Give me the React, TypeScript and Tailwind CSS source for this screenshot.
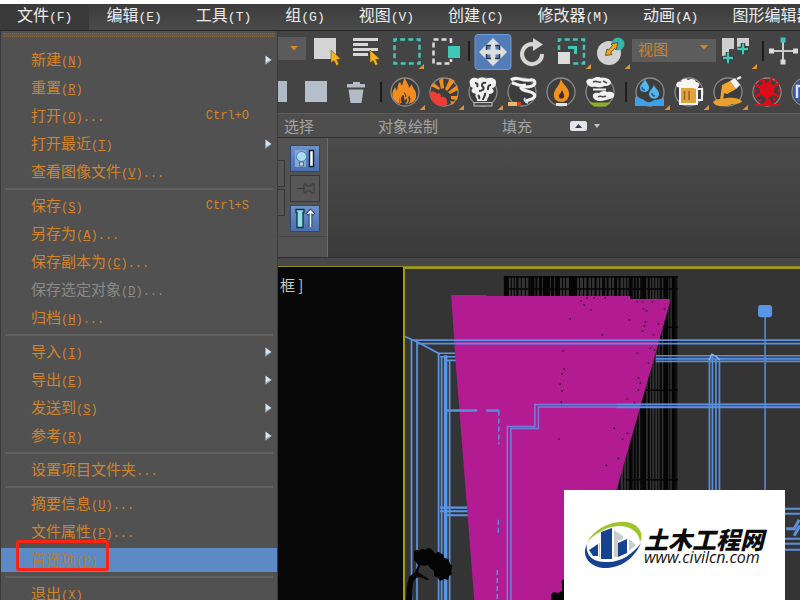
import type { ReactNode } from "react";
import { clsx } from "clsx";

const MONO = "font-['Liberation_Mono','Noto_Sans_CJK_SC',monospace]";
const CJK = "font-['Noto_Sans_CJK_SC',sans-serif]";

interface MenuEntry {
  label: string;
  hotkey?: string;
  dots?: boolean;
  shortcut?: string;
  submenu?: boolean;
  disabled?: boolean;
  active?: boolean;
}

const MENU_BAR = [
  ["文件", "(F)"],
  ["编辑", "(E)"],
  ["工具", "(T)"],
  ["组", "(G)"],
  ["视图", "(V)"],
  ["创建", "(C)"],
  ["修改器", "(M)"],
  ["动画", "(A)"],
  ["图形编辑器", ""],
];

const FILE_MENU: MenuEntry[][] = [
  [
    { label: "新建", hotkey: "N", submenu: true },
    { label: "重置", hotkey: "R" },
    { label: "打开", hotkey: "O", dots: true, shortcut: "Ctrl+O" },
    { label: "打开最近", hotkey: "T", submenu: true },
    { label: "查看图像文件", hotkey: "V", dots: true },
  ],
  [
    { label: "保存", hotkey: "S", shortcut: "Ctrl+S" },
    { label: "另存为", hotkey: "A", dots: true },
    { label: "保存副本为", hotkey: "C", dots: true },
    { label: "保存选定对象", hotkey: "D", dots: true, disabled: true },
    { label: "归档", hotkey: "H", dots: true },
  ],
  [
    { label: "导入", hotkey: "I", submenu: true },
    { label: "导出", hotkey: "E", submenu: true },
    { label: "发送到", hotkey: "S", submenu: true },
    { label: "参考", hotkey: "R", submenu: true },
  ],
  [{ label: "设置项目文件夹", dots: true }],
  [
    { label: "摘要信息", hotkey: "U", dots: true },
    { label: "文件属性", hotkey: "P", dots: true },
    { label: "首选项", hotkey: "P", active: true },
  ],
  [{ label: "退出", hotkey: "X" }],
];

function MenuBar() {
  return (
    <nav className="flex h-[27px] shrink-0 overflow-hidden border-b border-[#262626] bg-linear-to-b from-[#3c3c3c] to-[#4b4b4b]">
      {MENU_BAR.map(([label, key], i) => (
        <button
          key={label}
          className={clsx(
            "flex shrink-0 items-baseline px-[17px] pb-1 text-[#ececec]",
            i === 0 && "bg-[#3a3a3a]"
          )}
        >
          <span className={clsx(CJK, "text-base leading-5")}>{label}</span>
          <span className={clsx(MONO, "text-[13px] leading-5")}>{key}</span>
        </button>
      ))}
    </nav>
  );
}

function MenuRow({ item }: { item: MenuEntry }) {
  return (
    <li className="relative flex h-7 items-center">
      <button
        disabled={item.disabled}
        className={clsx(
          "flex h-6 w-full items-center pr-[5px] pl-[30px] text-left",
          item.active && "bg-[#5b8ac4] text-[#a8804f]",
          item.disabled ? "text-[#8a8a8a]" : !item.active && "text-[#d2842a]"
        )}
      >
        <span className="flex items-baseline">
          <span className={clsx(CJK, "text-[15px] leading-6")}>{item.label}</span>
          <span className={clsx(MONO, "text-xs leading-6")}>
            {item.hotkey && (
              <>
                (<u className="underline-offset-1">{item.hotkey}</u>)
              </>
            )}
            {item.dots && "..."}
          </span>
        </span>
        <span className="grow" />
        {item.shortcut && <span className={clsx(MONO, "pr-[23px] text-xs leading-6")}>{item.shortcut}</span>}
        {item.submenu && (
          <svg width="7" height="10" viewBox="0 0 7 10" aria-hidden="true">
            <path d="M0.5 0.5 6.5 5 0.5 9.5Z" fill="#d7e6f2" />
            <path d="M6.5 5 0.5 9.5 1.5 7Z" fill="#7fa3c0" />
          </svg>
        )}
      </button>
      {item.active && (
        <span className="pointer-events-none absolute -top-1.5 left-[15px] h-[31px] w-[93px] rounded-[3px] border-[3px] border-[#fb2414]" />
      )}
    </li>
  );
}

function FileMenu() {
  return (
    <aside className="w-[278px] shrink-0 overflow-hidden border-x border-[#3a3a3a] bg-[#515151]">
      <div className="mx-0.5 mt-0.5 mb-[9px] h-1 border-y border-dotted border-[#85683f] bg-[#64584a]" />
      {FILE_MENU.map((group, i) => (
        <div key={i}>
          {i > 0 && (
            <div className="mx-1 flex h-1.5 items-center">
              <hr className="w-full border-t-2 border-[#616161]" />
            </div>
          )}
          <ul>
            {group.map((item) => (
              <MenuRow key={item.label} item={item} />
            ))}
          </ul>
        </div>
      ))}
    </aside>
  );
}

interface ToolProps {
  label: string;
  flyout?: boolean;
  ring?: boolean;
  active?: boolean;
  children: ReactNode;
}

function Tool({ label, flyout, ring, active, children }: ToolProps) {
  return (
    <button aria-label={label} className="h-10 w-[39px] shrink-0">
      <svg width="39" height="40" viewBox="0 0 39 40" fill="none">
        {active && <rect x="1" y="3.500" width="36" height="35" rx="3" fill="#527db8" stroke="#6f9bd6" />}
        {ring && <circle cx="19" cy="20" r="14" fill="#3d3d3d" stroke="#8b8b8b" strokeWidth="1.300" />}
        {children}
        {flyout && <path d="M39 33v5h-5.500Z" fill="#dd9338" />}
      </svg>
    </button>
  );
}

function Divider() {
  return (
    <span className="flex h-10 w-[11px] shrink-0 items-center justify-center">
      <span className="h-5 w-0.5 bg-[#1d1d1d]" />
    </span>
  );
}

const CURSOR = "M0 0v13l3-2.500 2.500 5 2.500-1.200-2.400-4.800 4.200-.5Z";

function MainToolbar() {
  return (
    <div className="flex h-[41px] shrink-0 overflow-hidden">
      <button aria-label="过滤器" className="mt-1.5 mr-px flex h-[23px] w-7 shrink-0 items-center justify-center bg-[#5b5b5b] pl-1">
        <svg width="8" height="5" viewBox="0 0 8 5"><path d="M0 0h8L4 4.500Z" fill="#d8852a" /></svg>
      </button>
      <Tool label="选择对象">
        <path d="M7 7h22v21H7Z" fill="#d4d4d4" />
        <path d={CURSOR} transform="translate(24 19)" fill="#f6b21a" stroke="#5a4310" strokeWidth=".5" />
      </Tool>
      <Tool label="按名称选择">
        <path d="M7 8.500h25M7 13.500h15M7 18.500h25M7 23.500h15" stroke="#d8d8d8" strokeWidth="3" />
        <path d={CURSOR} transform="translate(24 19)" fill="#f6b21a" stroke="#5a4310" strokeWidth=".5" />
      </Tool>
      <Tool label="矩形选择区域" flyout>
        <rect x="9.500" y="8.500" width="25" height="24" stroke="#3fc7b8" strokeWidth="2.500" strokeDasharray="5 3.170" strokeDashoffset="2.500" />
      </Tool>
      <Tool label="窗口/交叉">
        <path d="M27 12V8.500H9.500v24H27V28" stroke="#dcdcdc" strokeWidth="2.500" strokeDasharray="5 3" />
        <path d="M24 15h12v12H24Z" fill="#3fc7b8" />
      </Tool>
      <Divider />
      <Tool label="选择并移动" active>
        <g transform="translate(0 1)">
          <path d="M19 6 26 13h-4.500v4.500H26V13l7 7-7 7v-4.500h-4.500V27H26l-7 7-7-7h4.500v-4.500H12V27l-7-7 7-7v4.500h4.500V13H12Z" fill="#dedede" />
          <path d="M12.500 18v-4.500H17M21 13.500h4.500V18M25.500 22v4.500H21M17 26.500h-4.500V22" stroke="#26374f" strokeWidth="1.500" />
        </g>
      </Tool>
      <Tool label="选择并旋转">
        <path d="M23 14a10 10 0 1 0 6 9" stroke="#d6d6d6" strokeWidth="4" />
        <path d="M20 7 30 13.500 20 20Z" fill="#d6d6d6" />
      </Tool>
      <Tool label="选择并缩放" flyout>
        <rect x="7" y="8.500" width="25" height="24" stroke="#3fc7b8" strokeWidth="2.500" strokeDasharray="5 3.170" strokeDashoffset="2.500" />
        <path d="M4 19h16v16H4Z" fill="#444" />
        <path d="M6 21h12v12H6Z" fill="#dcdcdc" />
        <path d="M16 16.500h7.500V23" stroke="#3fc7b8" strokeWidth="3" />
      </Tool>
      <Tool label="选择并放置" flyout>
        <circle cx="18" cy="22" r="12" fill="#d2d2d2" />
        <circle cx="27" cy="13" r="6.500" fill="#35b5ae" />
        <path d="M27 11.500 25 19l-1.500-1.500-4 4.500 1.500 1.500-6.500 1 1.500-6.500 1.500 1 4-4.500-1.500-1.500Z" fill="#f0a91c" stroke="#4c3b17" strokeWidth=".8" />
      </Tool>
      <div className="relative mt-1.5 mr-0.5 ml-0.5 h-[23px] w-[84px] shrink-0">
        <select aria-label="参考坐标系" className={clsx(CJK, "h-full w-full appearance-none bg-[#5d5d5d] pb-1 pl-1.5 text-[15px] leading-5 text-[#cf8230]")}>
          <option>视图</option>
        </select>
        <svg className="pointer-events-none absolute top-2 right-2" width="8" height="5" viewBox="0 0 8 5">
          <path d="M0 0h8L4 4.500Z" fill="#d8852a" />
        </svg>
      </div>
      <Tool label="使用轴点中心" flyout>
        <path d="M4 7h12v11h-5v8H8l-4-1ZM19 7h12v8h-7v4h-5Z" fill="#cfcfcf" />
        <path d="M10 21v12M4.500 27h11M25 12v12M19.500 18h11" stroke="#343434" strokeWidth="4.500" />
        <path d="M10 21.500v11M5 27h10M25 12.500v11M20 18h10" stroke="#3fc7b8" strokeWidth="2.300" />
      </Tool>
      <Divider />
      <Tool label="选择并操纵">
        <path d="M15 8v24M3 20h24" stroke="#c9c9c9" strokeWidth="2" />
        <path d="M12.500 6.500h5v5h-5Z" fill="#3fc7b8" />
        <path d="M1 17.500h5v5H1ZM25 17.500h5v5h-5ZM12.500 28.500h5v5h-5Z" fill="#dcdcdc" />
      </Tool>
    </div>
  );
}

function FluidToolbar() {
  return (
    <div className="flex h-[41px] shrink-0 overflow-hidden">
      <button aria-label="显示列表" className="mt-[9px] mr-2.5 h-[21px] w-[9px] shrink-0 bg-[#b0bbc7]" />
      <Tool label="图层">
        <path d="M8 9h22v21H8Z" fill="#b5bfca" />
      </Tool>
      <Tool label="删除">
        <path d="M11 12h18v3.500H11ZM17 10h7v3h-7ZM12.500 17.500h15L25.500 31h-11Z" fill="#b3bcc6" />
      </Tool>
      <Divider />
      <Tool label="火焰" ring flyout>
        <path d="M14 32C8 30 5 24 7 19l2-4 2 4c1-4 0-6 3-9l2 4c1-3 1-6 3-8 1 4 4 6 4 10l3-4c0 4 4 6 4 10 1 6-3 9-8 10 2-2 4-5 1-8l-2 3c0-3-1-5-3-7-1 4-5 5-5 8 0 2 1 3 1 4Z" fill="#f28c1e" />
        <path d="M15 31c-3-5 1-7 2-10 2 2 2 4 2 6l2-2c2 3 1 5-1 7" stroke="#f28c1e" strokeWidth="1.500" />
      </Tool>
      <Tool label="爆炸" ring flyout>
        <path d="M14 18 6 14l3-3 6 5ZM16 17l-2-9 4-2 1 10ZM20 17l5-11 5 3-8 10ZM23 20l9-7 1 5-8 4ZM26 24h7l-1 4-6-1ZM25 29l5 1-3 3Z" fill="#f28c1e" />
        <path d="M5 21c3-3 6-1 7 1 3-2 4 1 4 3 3-1 6 1 6 4 1 2 0 4-2 5-8 1-15-4-15-13Z" fill="#ee3d32" />
      </Tool>
      <Tool label="烟雾" ring flyout>
        <path d="M6 12c-2-5 4-8 8-5 4-3 7-1 8 0 5-3 11 0 10 4 0 3-2 5-4 5 4 4 0 6-3 6 1 3-2 3-2 7H13c1-3-3-4-1-7-4-1-6-3-3-6-2-1-3-2-3-4Z" fill="#f1f1f1" />
        <path d="M11 11c3 0 3 2 2 4M22 11c-4-1-5 2-3 4s-1 4-4 4M27 13c-3 0-3 2-3 5M19 28c0-3 3-4 2-7M15 27c1-2 0-3-1-4" stroke="#393939" strokeWidth="2" />
        <path d="M10 30.500h18V34H10Z" fill="#4b4b4b" stroke="#c7c7c7" />
      </Tool>
      <Tool label="香烟" ring>
        <path d="M8 8c6-5 10 2 19 0 5-1 7 4 2 6-5 2-9 0-11 2 2 4 9 2 13 6 3 4-3 5-8 7M9 11c6 1 7 4 14 2" stroke="#f2f2f2" strokeWidth="3" />
        <path d="M22 26c-1 2 0 4 3 5" stroke="#c6dff0" strokeWidth="2" />
        <path d="M5 30h9v4H5Z" fill="#e6ba6a" />
        <path d="M14 30h4v4h-4Z" fill="#dc3a2b" />
      </Tool>
      <Tool label="蜡烛" ring>
        <path d="M19 6c0 6 9 9 8 17-1 5-4 7-7 7-5 0-9-3-8-8 0-5 6-8 7-16Z" fill="#f3911f" />
        <path d="M20 17c0 3 3 5 2 8-1 2-5 2-5 0-1-3 3-4 3-8Z" fill="#3a2f26" />
        <path d="M14 31h11v3H14Z" fill="#e2e2e2" />
      </Tool>
      <Tool label="云" ring>
        <path d="M7 13c-4-4 0-7 4-6 4-3 8-2 9-1 6-1 10 2 10 5-1 3-5 3-7 3-5 3-8 0-11 1-2 0-4-1-5-2Z" fill="#f1f1f1" />
        <path d="M12 25c-1-4 3-5 6-4 4-3 7-2 8-1 5-1 8 1 7 4-1 3-5 3-8 4-6 2-12 1-13-3Z" fill="#f1f1f1" />
        <path d="M12 10c4-2 5 1 8 0M22 9l4 2M17 25c3-2 4 1 8-1" stroke="#4a4a4a" strokeWidth="1.500" />
        <path d="M12 17.500h13" stroke="#f1f1f1" strokeWidth="2" />
        <path d="M8 30.500h22l-5 4H13Z" fill="#8cb326" />
      </Tool>
      <Divider />
      <Tool label="水" ring flyout>
        <path d="M14 6c0 4 5 6 4 11-1 4-9 4-9-1 0-4 5-6 5-10ZM23 12c0 4 6 6 5 11-1 5-10 5-10-1 0-4 5-6 5-10Z" fill="#53b4ee" />
        <path d="M4 25c5-1 5 3 8 2 3 4 8 4 11 1 3 0 6-1 10-2v8H4Z" fill="#3aa2ea" />
        <path d="M11 15c0 2 1 3 3 3M21 21c0 2 1 3 3 3" stroke="#1f5f96" strokeWidth="1.500" />
      </Tool>
      <Tool label="啤酒" ring flyout>
        <path d="M10 15h17v17H10Z" fill="#e3a23a" stroke="#f3f3f3" strokeWidth="2" />
        <path d="M27 17h5v11h-5" stroke="#f3f3f3" strokeWidth="2" />
        <path d="M7 15c-2-4 1-6 4-5 1-4 5-4 7-2 4-2 7-1 8 2 4 0 4 4 2 5l-3 2-3-2-4 1-3-1-3 1Z" fill="#f5f5f5" />
        <path d="M14.500 19v9M19 19v9" stroke="#95642a" strokeWidth="1.500" />
      </Tool>
      <Tool label="蜂蜜" ring flyout>
        <path d="m13 13 8-4 6 8-9 5-3-1-1 8h-3Z" fill="#f0a532" />
        <path d="m21 9 5-3 5 7-4 4Z" fill="#f1f1f1" />
        <path d="m28 7 4-2" stroke="#f1f1f1" strokeWidth="2.500" />
        <path d="M4 30c3-4 11-3 14-4 5-1 12 0 15 3-2 4-8 2-12 4-5 2-15 2-17-3Z" fill="#e9a02f" />
      </Tool>
      <Tool label="血液" ring>
        <path d="M19 19 15 8M19 19l4-12M19 19l11-7M19 19 8 13M19 19l11 5M19 19 8 24M19 19v13" stroke="#dc0d18" strokeWidth="3" strokeLinecap="round" />
        <circle cx="19" cy="18" r="7.500" fill="#dc0d18" />
        <path d="M12 8.500h.1M28 8.500h.1M7 18.500h.1M31 18.500h.1M26 27.500h.1M12 28.500h.1" stroke="#dc0d18" strokeWidth="3" strokeLinecap="round" />
        <path d="m19 27-4 5H7v2h25v-2h-8l-2-5Z" fill="#dc0d18" />
      </Tool>
      <Tool label="海洋" ring>
        <circle cx="19" cy="19.500" r="13" fill="#3657b0" />
        <path d="M10 26V14h10v12" stroke="#dce3f5" strokeWidth="2.500" />
      </Tool>
    </div>
  );
}

function RibbonTabs() {
  return (
    <div className={clsx(CJK, "flex h-[25px] shrink-0 items-center overflow-hidden border-t border-b border-t-[#5e5e5e] border-b-[#2f2f2f] bg-[#4e4e4e] pt-1 pl-1.5 text-[15px] leading-5 text-[#a3a3a3]")}>
      <button className="mr-16 shrink-0 pb-1">选择</button>
      <button className="mr-16 shrink-0 pb-1">对象绘制</button>
      <button className="mr-[38px] shrink-0 pb-1">填充</button>
      <button aria-label="最小化功能区" className="flex shrink-0 items-center gap-[7px] pb-1">
        <svg width="17" height="10" viewBox="0 0 17 10">
          <rect width="17" height="10" rx="2.500" fill="#e3e5ea" />
          <path d="M5 7h7L8.500 3Z" fill="#333a48" />
        </svg>
        <svg width="6" height="4" viewBox="0 0 6 4"><path d="M0 0h6L3 4Z" fill="#c4c4c4" /></svg>
      </button>
    </div>
  );
}

const PANEL_BUTTON = "h-[27px] w-[30px] border border-[#2b477c] bg-linear-to-b from-[#6e92ca] to-[#4a70af]";

function RibbonPanel() {
  return (
    <div className="flex h-[120px] shrink-0 border-b border-[#303030] bg-linear-to-b from-[#4b4b4b] to-[#3b3b3b]">
      <div className="flex w-[50px] shrink-0 flex-col border-r border-[#6a6a6a] bg-[#535353]">
        <div className="flex grow gap-[5px] border-b border-[#474747]">
          <div className="flex flex-col gap-0.5 pt-[22px]">
            <button aria-label="上一个" className="h-[27px] w-[7px] border border-l-0 border-[#353535] bg-[#555]" />
            <button aria-label="下一个" className="h-[27px] w-[7px] border border-l-0 border-[#353535] bg-[#555]" />
          </div>
          <div className="flex flex-col gap-[3px] pt-[7px]">
            <button aria-label="显示最终结果" className={PANEL_BUTTON}>
              <svg width="28" height="25" viewBox="0 0 28 25" fill="none">
                <path d="M4 4h11v17H4Z" fill="#88a8d4" />
                <circle cx="10.500" cy="10.500" r="5" fill="#abdcf0" stroke="#477faf" />
                <path d="M8.500 16h4v4h-4Z" fill="#c3dcea" stroke="#42678f" />
                <path d="M18.500 4.500h4v16h-4Z" fill="#fff" stroke="#16243a" strokeWidth="1.500" />
              </svg>
            </button>
            <button aria-label="锁定堆栈" className="h-[27px] w-[30px] border border-[#383838] bg-[#575757]">
              <svg width="28" height="25" viewBox="0 0 28 25" fill="none" stroke="#383838">
                <path d="M6 12.500h7M13 8v9h2v-2h5v2h3V8h-3v2h-5V8Z" />
              </svg>
            </button>
            <button aria-label="使唯一" className={PANEL_BUTTON}>
              <svg width="28" height="25" viewBox="0 0 28 25" fill="none">
                <path d="M5 3.500h8v3h-1v15H6v-15H5Z" fill="#8be0e6" stroke="#152f43" strokeWidth="1.300" />
                <path d="M19.500 21V6M16 8.500 19.500 5l3.500 3.500" stroke="#1f3556" strokeWidth="3.500" />
                <path d="M19.500 21V5M16.500 8l3-3 3 3" stroke="#f4f8ff" strokeWidth="1.700" />
              </svg>
            </button>
          </div>
        </div>
        <div className="h-5" />
      </div>
    </div>
  );
}

// x position and stroke width of every strand of the curtain
const STRANDS: [number, number][] = [
  [506, 5], [511, 1], [514, 1], [517, 2], [521, 1], [525, 1], [529, 2], [532, 4], [536, 2], [540, 3],
  [546, 7], [552, 3], [557, 5], [562, 1], [565, 1], [569, 1], [573, 7], [579, 1], [583, 1], [587, 2],
  [591, 1], [595, 2], [599, 1], [603, 3], [607, 2], [611, 1], [615, 3], [619, 2], [623, 1], [626, 1],
  [630, 4], [634, 2], [637, 2], [640, 1], [643, 5], [648, 2], [651, 1], [654, 1], [657, 1], [660, 2],
  [665, 5], [669, 1], [673, 4], [676, 1],
];

const SPECKS: [number, number][] = [
  [569, 319], [583, 305], [580, 301], [562, 351], [563, 369], [561, 374], [559, 384], [561, 391], [560, 402],
  [558, 439], [590, 310], [586, 298], [593, 298], [604, 298], [628, 320], [642, 309], [645, 311], [644, 322],
  [643, 326], [641, 331], [657, 324], [663, 309], [652, 335], [636, 302], [641, 302], [651, 302], [649, 348],
  [636, 353], [647, 363], [653, 350], [637, 378], [639, 383], [637, 390], [626, 399], [633, 403], [626, 433],
  [621, 439], [617, 458], [613, 428], [605, 465], [601, 335],
];

function CameraViewport() {
  return (
    <svg className="h-full w-full" viewBox="405 270 395 330" preserveAspectRatio="xMinYMin slice" fill="none" aria-label="透视视口">
      <g stroke="#050505">
        {STRANDS.map(([x, width]) => (
          <path key={x} d={`M${x} 277V492`} strokeWidth={width} />
        ))}
        <path d="M504 278h173M504 290h173M620 328h57M632 391h45M625 480h52" strokeWidth="1.500" />
      </g>
      <g stroke="#5a96e6">
        <path d="M411.500 341V600M417 343V600M404 337l14 6 22 12M438.500 354V600M441.500 357V600M449.500 361V600" strokeWidth="1.700" />
        <path d="M445.500 356V600" strokeWidth="3.500" />
        <path d="M438 354h18M440 357.500h16M444 361h14" strokeWidth="1.700" />
        <path d="M440 508h30M440 511.500h30M447 515.500h23" strokeWidth="2.200" />
      </g>
      <path d="M451 296h35l1 1h142l1 3h39v4L616 490v110H474L464 472 456 370Z" fill="#b21b92" />
      <g fill="#240a22">
        {SPECKS.map(([x, y]) => (
          <rect key={`${x}-${y}`} x={x} y={y} width="1.500" height="1.500" />
        ))}
      </g>
      <g stroke="#588fdf">
        <path d="M411 341H800M417 344.500H800" strokeWidth="1.700" />
        <path d="M655 356.500H800M655 362H800" strokeWidth="1.700" />
        <path d="M655 359.500H800" strokeWidth="2" />
        <path d="M446 411h31M486 411h13" strokeWidth="2.500" />
        <path d="M498.500 411v34M498 520v15M497 570v30" strokeWidth="1.500" strokeDasharray="5 3" />
        <path d="M800 405H534.500v22H507V600M800 407.500H538v21.500H510.500V600" strokeWidth="1.500" stroke="#747ddb" />
        <path d="M616 405H800M616 408H800" strokeWidth="1.700" />
        <path d="M708.500 361V600M711.500 357V600M715 359V600M718.500 362V600" strokeWidth="1.700" />
        <path d="M764 317V600" strokeWidth="1.500" />
        <path d="M780 509h20M780 514h20M780 539h20M780 544h20M780 550h20" strokeWidth="2" />
        <path d="M785 529h8l5-9M793 536l5-9h2" strokeWidth="3" />
      </g>
      <rect x="757" y="306" width="14" height="12" rx="3" fill="#5a96e6" />
      <path d="m708 361 3-6 4 2 4 4" stroke="#8bb6ef" strokeWidth="1.500" />
      <g fill="#040404">
        <path d="m414 551 3-1 2 1 3-2 3 1 4-2 3 2 3 4 3-2 5 3 1 3 4 1 2 5 2 2-1 5 1 3-3 2-1 4-4-1-4 2-3-4-3-1v-5l-4-3-2-3-4 1-3-1-2 3-1 4 6 4 5 3-2 1-7-3-4 1-3 4-1 18h-6l1-14 2-9 6-5 3-7-4-5Z" />
        <path d="m551 594 2-2 5 1 4-3-1-9 4-3v22h-14Z" />
      </g>
    </svg>
  );
}

function Watermark() {
  return (
    <div className="absolute right-[15px] bottom-0 flex h-[110px] w-[221px] items-center bg-white pl-5">
      <svg className="mr-0.5 shrink-0" width="58" height="48" viewBox="0 0 58 48" aria-hidden="true">
        <path d="M3 21C11 7 31-3 47 2c11 4 12 14 9 19C55 11 47 6 37 5 23 4 11 13 3 21Z" fill="#9cc52d" />
        <path d="M3 23c-7 14 5 23 16 24 17 1 31-9 38-25-8 11-20 19-33 19C9 42 1 34 3 23Z" fill="#164390" />
        <path d="m5 29 9-6v12H9Z" fill="#164390" />
        <path d="m17 11 11-4v31H17Z" fill="#164390" />
        <path d="m30 9 9 6v3l-5 2v16h-4Z" fill="#cbccce" />
        <path d="m34 22 9-4v14l-9 4Z" fill="#164390" />
        <path d="m45 18 7 6-7 6Z" fill="#cbccce" />
        <path d="M15.500 22v14" stroke="#c8c8ca" />
      </svg>
      <div className="pt-1">
        <div className={clsx(CJK, "text-2xl leading-5 font-black whitespace-nowrap text-[#0b0b0b] italic")}>土木工程网</div>
        <a href="#" className="block font-['Open_Sans',sans-serif] text-base leading-4 font-medium text-[#111] italic">
          www.civilcn.com
        </a>
      </div>
    </div>
  );
}

export default function App() {
  return (
    <div className="relative flex h-screen flex-col overflow-hidden bg-[#444] pt-1 before:absolute before:inset-x-0 before:top-0 before:h-1 before:bg-white">
      <MenuBar />
      <div className="flex min-h-0 flex-1">
        <FileMenu />
        <main className="flex min-w-0 flex-1 flex-col">
          <MainToolbar />
          <FluidToolbar />
          <RibbonTabs />
          <RibbonPanel />
          <div className="h-2 shrink-0 bg-[#484848]" />
          <div className="flex min-h-0 flex-1 border-t border-[#8b861f]">
            <section className={clsx(CJK, "w-[125px] shrink-0 overflow-hidden bg-[#080808] pt-2 pl-0.5 text-[15px] leading-5 text-[#c8c8c8]")}>
              框 ]
            </section>
            <section className="min-w-0 flex-1 border-t-2 border-l-2 border-[#a19a1b] bg-[#343434]">
              <CameraViewport />
            </section>
          </div>
        </main>
      </div>
      <Watermark />
    </div>
  );
}
